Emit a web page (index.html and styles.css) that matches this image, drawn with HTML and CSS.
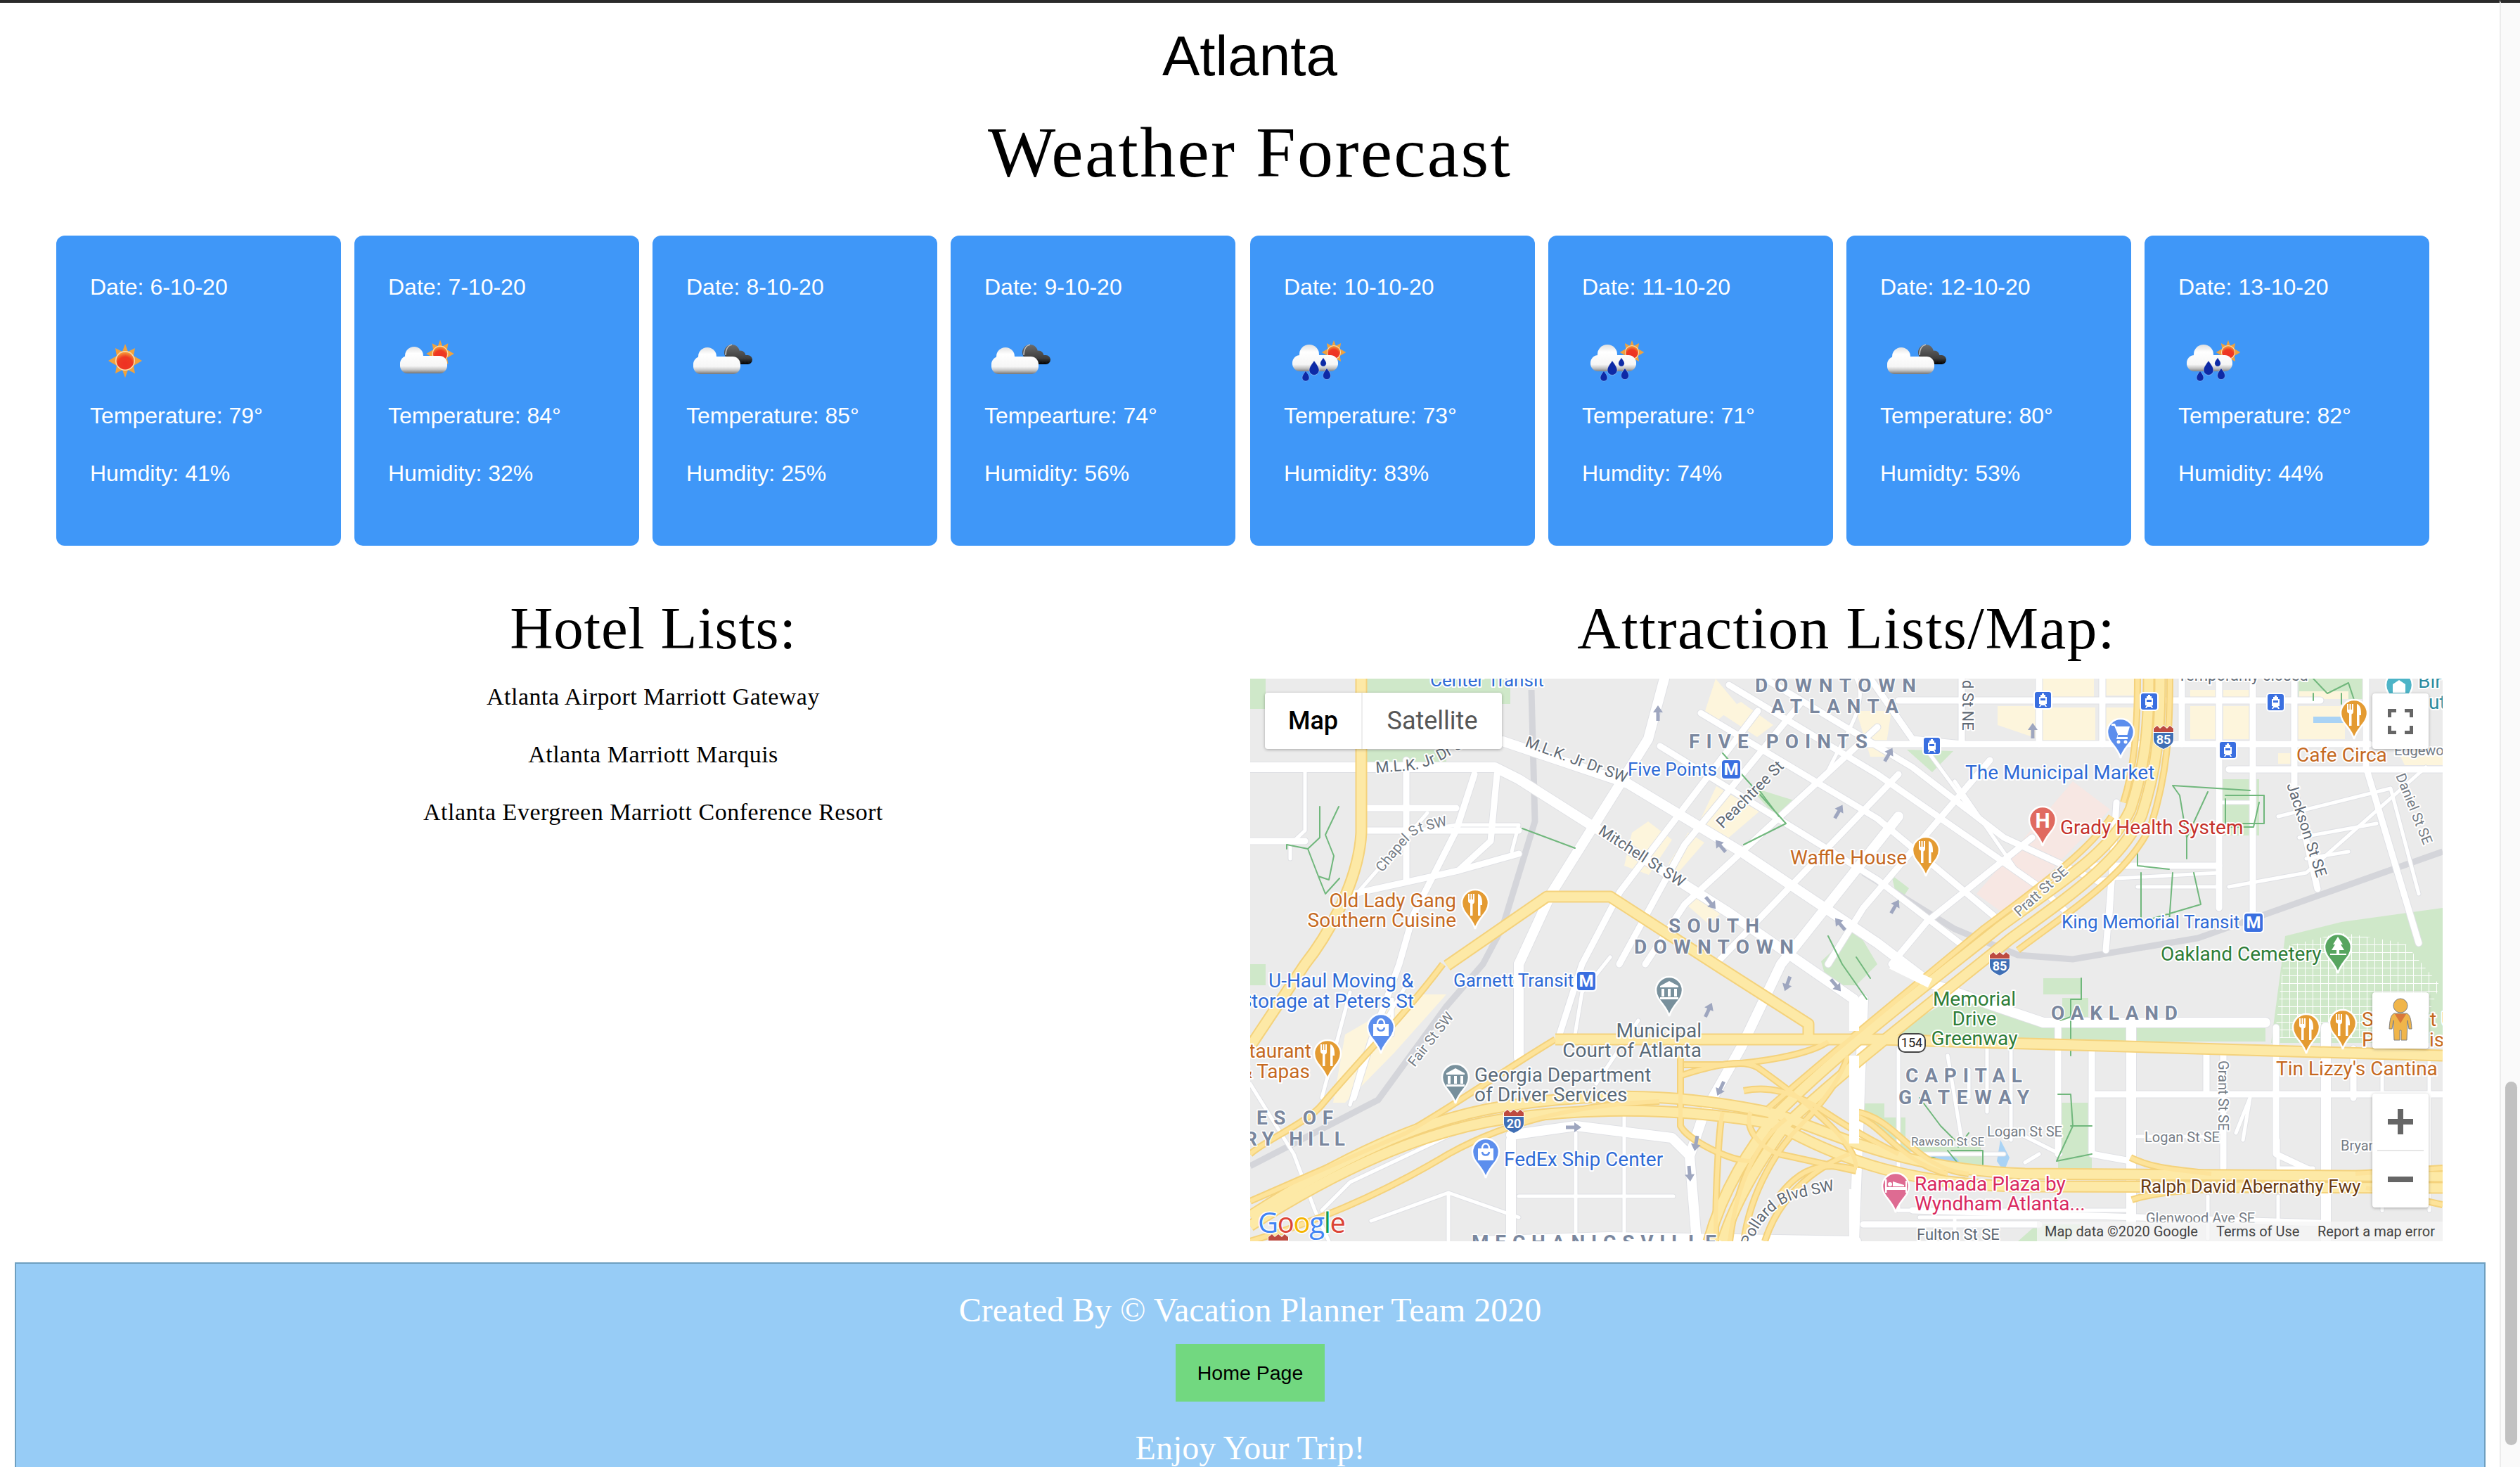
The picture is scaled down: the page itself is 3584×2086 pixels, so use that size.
FILE: index.html
```html
<!DOCTYPE html>
<html lang="en">
<head>
<meta charset="utf-8">
<title>Atlanta - Vacation Planner</title>
<link rel="stylesheet" href="styles.css">
</head>
<body>
<svg class="defs" width="0" height="0" aria-hidden="true">
  <defs>
    <filter id="soft" x="-10%" y="-10%" width="120%" height="120%"><feGaussianBlur stdDeviation="0.7"/></filter>
    <radialGradient id="discGrad" cx="50%" cy="70%" r="70%"><stop offset="0" stop-color="#ee3020"/><stop offset="0.6" stop-color="#ee3a22"/><stop offset="1" stop-color="#f6a23a"/></radialGradient>
    <linearGradient id="cloudGrad" gradientUnits="userSpaceOnUse" x1="0" y1="30" x2="0" y2="68"><stop offset="0" stop-color="#e2e2e2"/><stop offset="0.25" stop-color="#fff"/><stop offset="0.72" stop-color="#f6f6f6"/><stop offset="0.86" stop-color="#c4c4c4"/><stop offset="1" stop-color="#747474"/></linearGradient>
    <linearGradient id="darkGrad" gradientUnits="userSpaceOnUse" x1="0" y1="26" x2="0" y2="55"><stop offset="0" stop-color="#6f6f6f"/><stop offset="0.7" stop-color="#3d3d3d"/><stop offset="1" stop-color="#000"/></linearGradient>
    <g id="sunShape">
      <path class="ray" d="M0-24 4-13 14-18 12-7 24 0 12 7 14 18 4 13 0 24-4 13-14 18-12 7-24 0-12-7-14-18-4-13Z"/>
      <circle r="14" class="disc-ring"/><circle r="12.5" fill="url(#discGrad)"/>
    </g>
    <g id="cloudShape"><circle cx="37" cy="43" r="13"/><rect x="17" y="43" width="67" height="25" rx="11"/></g>
    <g id="dropShape"><path d="M0-1.7C.5-1 1-.4 1 .2A1 1 0 1 1-1 .2C-1-.4-.5-1 0-1.7Z"/></g>
    <symbol id="w-sun" viewBox="0 0 100 100"><g filter="url(#soft)"><use href="#sunShape" transform="translate(50 50)"/></g></symbol>
    <symbol id="w-few" viewBox="0 0 100 100"><g filter="url(#soft)"><use href="#sunShape" transform="translate(74 40) scale(.82)"/><use href="#cloudShape" fill="url(#cloudGrad)"/></g></symbol>
    <symbol id="w-broken" viewBox="0 0 100 100"><g filter="url(#soft)">
      <g fill="url(#darkGrad)"><circle cx="65" cy="38" r="11"/><circle cx="77" cy="43" r="7.5"/><rect x="56" y="42" width="38" height="13" rx="6.5"/></g>
      <path class="dark-rim" d="M56 42C56 33 60 28 65 27"/>
      <use href="#cloudShape" fill="url(#cloudGrad)" transform="translate(-7 1)"/></g></symbol>
    <symbol id="w-rain" viewBox="0 0 100 100"><g filter="url(#soft)">
      <use href="#sunShape" transform="translate(71 38) scale(.72)"/>
      <g fill="url(#cloudGrad)" transform="translate(0 -2)"><circle cx="36" cy="43" r="14"/><rect x="12" y="44" width="65" height="23" rx="11"/></g>
      <g class="drop">
        <use href="#dropShape" transform="translate(43 62) scale(7)"/>
        <use href="#dropShape" transform="translate(31 73) scale(5)"/>
        <use href="#dropShape" transform="translate(61 70) scale(5.5)"/>
        <use href="#dropShape" transform="translate(56 53) scale(4.2)"/>
      </g></g></symbol>

    <path id="pinShape" d="M0 0C-4-16-19-23-19-37A19 19 0 1 1 19-37C19-23 4-16 0 0Z"/>
    <g id="p-fork"><use href="#pinShape" class="pin pin-orange"/><path class="pg" d="M-10-50h2v8h1.500v-8h2v8H-3v-8h2v11c0 2-1 3-2.500 3.600V-19h-3.500v-17.400C-9-37-10-38-10-40ZM4-50c4 1 6 6 6 14v2H7.500v15H4Z"/></g>
    <g id="p-cart"><use href="#pinShape" class="pin pin-blue"/><path class="pg" d="M-13-49h5l1.500 4H13l-3.500 12h-13l-1 3H10v3H-6l2-7-5-12h-4Z"/><circle class="pg" cx="-3" cy="-23" r="2.500"/><circle class="pg" cx="7" cy="-23" r="2.500"/></g>
    <g id="p-bag"><use href="#pinShape" class="pin pin-blue"/><path class="pg" d="M-11-42h22v17h-22Z"/><path class="pl" d="M-5-42c0-9 10-9 10 0"/><path class="pl-blue" d="M-5-37c1 6 9 6 10 0"/></g>
    <g id="p-bank"><use href="#pinShape" class="pin pin-slate"/><path class="pg" d="M0-50-13-43v2H13v-2ZM-11-39h4v11h-4ZM-2-39h4v11h-4ZM7-39h4v11H7ZM-13-27H13v3H-13Z"/></g>
    <g id="p-tree"><use href="#pinShape" class="pin pin-green"/><path class="pg" d="M0-52-7-41h3l-5 8h7v5h-9v2H12v-2H2v-5h7l-5-8h3Z"/></g>
    <g id="p-bed"><use href="#pinShape" class="pin pin-pink"/><path class="pg" d="M-15-47h2.500v11H14v-9h2v17h-2v-4H-12.500v4H-15ZM-4-44 12-39v2H-4Z"/><circle class="pg" cx="-8" cy="-40" r="3"/></g>
    <g id="p-teal"><use href="#pinShape" class="pin pin-teal"/><path class="pg" d="M0-44-9-38v12H9v-12Z"/></g>
    <g id="p-h"><use href="#pinShape" class="pin pin-red"/><text class="pin-h" x="0" y="-26">H</text></g>
    <g id="tram"><rect class="box-white" x="-2" y="-2" width="27" height="27" rx="5"/><rect class="box-blue" width="23" height="23" rx="3"/><path class="pg" d="M10 2h3v2h2v3h2v10h-2l2 4h-2l-1-2H9l-1 2H6l2-4H6V7h2V4h2ZM8 9v3h7V9Z"/></g>
    <g id="metro"><rect class="box-white" x="-2" y="-2" width="30" height="30" rx="5"/><rect class="box-blue" width="26" height="26" rx="4"/><text class="metro-m" x="13" y="21">M</text></g>
    <g id="shield"><path class="shield-halo" d="M0 5 6 0l4 4 5-4 5 4 4-4 6 5V20C30 28 22 32 15 35 8 32 0 28 0 20Z"/><path class="shield-red" d="M1 5 6 1l4 4 5-4 5 4 4-4 5 4v5H1Z"/><path class="shield-blue" d="M1 11H29V20C29 27 22 31 15 34 8 31 1 27 1 20Z"/></g>
    <path id="arrow" d="M0-11 7-1H2.500V11h-5V-1H-7Z"/>

    <g id="hwBig">
      <path d="M1778 1728C1900 1650 2020 1590 2140 1572 2280 1550 2400 1555 2527 1583 2640 1625 2720 1662 2880 1668L3474 1672"/>
      <path d="M1778 1742C1900 1664 2020 1608 2140 1590 2270 1572 2400 1575 2527 1598 2620 1650 2720 1685 2880 1686L3474 1688"/>
      <path d="M3056 964C3056 1040 3050 1090 3030 1150 3000 1215 2920 1260 2840 1320 2740 1400 2620 1490 2527 1583 2490 1630 2450 1690 2430 1764"/>
      <path d="M3072 964C3072 1040 3068 1090 3046 1158 3016 1225 2940 1275 2858 1335 2760 1415 2640 1505 2540 1598 2510 1640 2470 1700 2450 1764"/>
      <path d="M1936 964V1183C1932 1260 1880 1340 1856 1370L1778 1487"/>
      <path d="M2058 1372 2200 1274H2290L2442 1372 2572 1455V1477"/>
      <path d="M2212 1477H2670L3474 1500"/>
    </g>
    <g id="hwSmall">
      <path d="M3040 964C3040 1030 3036 1090 3020 1140"/>
      <path d="M3086 964C3086 1040 3082 1100 3060 1170 3030 1240 2950 1290 2870 1350"/>
      <path d="M3003 1160C2970 1210 2900 1260 2820 1320 2700 1420 2600 1500 2515 1575"/>
      <path d="M2212 1477C2140 1520 2070 1570 2000 1610L1778 1707"/>
      <path d="M2360 1565C2250 1570 2150 1590 2060 1640 1960 1700 1860 1740 1778 1764"/>
      <path d="M2052 1370C2000 1440 1930 1510 1880 1570 1860 1595 1800 1620 1778 1640"/>
      <path d="M2395 1513H2450C2500 1510 2570 1500 2600 1480"/>
      <path d="M2392 1528C2440 1512 2480 1505 2500 1517 2560 1560 2640 1620 2640 1660"/>
      <path d="M2390 1500V1600C2400 1620 2460 1650 2490 1650"/>
      <path d="M2480 1550C2520 1542 2550 1555 2580 1570 2610 1590 2640 1610 2700 1640"/>
      <path d="M2460 1764C2470 1680 2500 1620 2540 1590"/>
      <path d="M2480 1764C2490 1690 2530 1630 2560 1600 2590 1570 2620 1530 2628 1500"/>
      <path d="M2510 1764C2530 1700 2580 1660 2630 1640"/>
      <path d="M2440 1764C2440 1680 2445 1600 2450 1580"/>
      <path d="M2530 1700C2560 1660 2590 1650 2640 1662"/>
      <path d="M2640 1664 2530 1640C2500 1630 2480 1600 2490 1580"/>
      <path d="M2640 1580C2700 1590 2720 1660 2800 1668"/>
      <path d="M2640 1586C2680 1600 2700 1650 2770 1668"/>
      <path d="M3030 1645C3060 1660 3090 1662 3145 1668"/>
      <path d="M3032 1705C3080 1690 3140 1690 3200 1688"/>
      <path d="M3350 1668 3474 1660"/>
      <path d="M3365 1688 3474 1712"/>
    </g>
    <g id="rdBig">
      <path d="M1778 1090H2126L2160 1107 2264 1173 2459 1297 2637 1420"/>
      <path d="M2137 1053 2315 1113 2476 1210 2670 1340 2745 1397 2829 1427 2906 1453H3222"/>
      <path d="M2700 1160 2533 1370 2477 1487 2423 1583 2403 1643 2413 1764"/>
      <path d="M2160 1370V1503M2149 1620V1764M2149 1613 2241 1600 2378 1617 2401 1640"/>
      <path d="M2367 964 2344 1050 2206 1270 2160 1370"/>
      <path d="M3031 1460V1740M3308 1460V1764M2650 1420 2637 1764"/>
      <path d="M2100 1764 2290 1758 2640 1764"/>
    </g>
    <g id="rdMid">
      <path d="M2419 1013 2670 1163 2846 1310"/>
      <path d="M2361 1060 2670 1250 2800 1350"/>
      <path d="M2459 973 2670 1100 2900 1260 2960 1315"/>
      <path d="M2510 964 2720 1090 2850 1190 2990 1255"/>
      <path d="M2500 1010 2304 1267 2250 1370 2218 1470"/>
      <path d="M2560 1000 2396 1200 2303 1370"/>
      <path d="M2670 1033 2396 1285 2340 1370"/>
      <path d="M2700 1100 2440 1370"/>
      <path d="M2830 1080 2650 1290 2600 1370"/>
      <path d="M2890 1190 2740 1310 2690 1370"/>
      <path d="M2660 964 2720 1050 2790 1057M2790 964V1057M2650 1057H3370M2700 995H3300"/>
      <path d="M2900 964V1057M2990 964V1057M3103 964V1057M3156 964V1290M3204 964V1300M3263 964V1120L3296 1263M3365 964V1090L3440 1340"/>
      <path d="M3170 1093H3474M3010 1140 3000 1300"/>
      <path d="M2975 1230H3156M3003 1250 2995 1350"/>
      <path d="M1936 1148H2071M1936 1180H2160M1778 1195H1856M2000 1080V1250"/>
      <path d="M2129 1100 2120 1195 2074 1237 1925 1270M2160 1213 2074 1237"/>
      <path d="M2097 1100 2071 1180 2010 1300 1990 1370 1950 1480 1925 1560"/>
      <path d="M3138 1490V1555M3162 1490V1660M3237 1460V1640L3290 1665M3347 1490V1560M2975 1555H3474M2927 1460V1640M2975 1490V1640L3030 1650"/>
      <path d="M2650 1740 2900 1740M2720 1720 3300 1738"/>
    </g>
    <g id="rdMin">
      <path d="M1856 1090V1180L1840 1195M1778 1195H1832M1835 1195V1220"/>
      <path d="M1925 1275 2030 1155M2020 1180 2071 1172H2160L2150 1210"/>
      <path d="M1980 1420V1470M1778 1540 1840 1640 1870 1720 1890 1764"/>
      <path d="M2000 1400 1940 1500 1920 1570M1920 1410 1880 1560"/>
      <path d="M2090 1600 1920 1680 1880 1720M1950 1735 2060 1695 2160 1730M2060 1695V1764M2160 1700H2380"/>
      <path d="M2241 1610V1764M2310 1580V1764M2330 1450 2270 1540M2290 1360 2250 1410 2240 1470"/>
      <path d="M2640 964C2660 1000 2620 1050 2600 1095M2780 1110 2870 1240M2740 1065 2810 1160"/>
      <path d="M3040 1260H3156M2975 1250 3156 1240M3156 1140H3204M3170 1260 3280 1240 3450 1090"/>
      <path d="M3240 1160 3400 1120 3440 1270M3270 1190 3380 1170M3280 1220 3340 1210"/>
      <path d="M2700 1490V1720M2770 1500 2790 1620M2826 1490V1580M2800 1520V1560M2860 1490V1620"/>
      <path d="M2700 1640H2850M2860 1605 2930 1640M2900 1640 2880 1652"/>
      <path d="M3040 1615H3150M3180 1610 3200 1560 3190 1620M3240 1620V1660H3290"/>
      <path d="M3455 1495V1720M3388 1500V1720M3140 1700V1760M3240 1700V1760"/>
      <path d="M2700 1720H3030M2730 1730H3040M2780 1730V1764"/>
    </g>
    <pattern id="cemGrid" width="11" height="11" patternUnits="userSpaceOnUse"><path class="cem-line" d="M0 0H11M0 0V11"/></pattern>
  </defs>
</svg>

<div class="app">
<main class="page">
  <h1 class="city">Atlanta</h1>
  <h2 class="forecast-title">Weather Forecast</h2>

  <section class="cols cards-row">
    <div class="cards">
      <article class="card"><p>Date: 6-10-20</p><svg class="wicon" viewBox="0 0 100 100"><use href="#w-sun"/></svg><p class="temp">Temperature: 79°</p><p>Humdity: 41%</p></article>
      <article class="card"><p>Date: 7-10-20</p><svg class="wicon" viewBox="0 0 100 100"><use href="#w-few"/></svg><p class="temp">Temperature: 84°</p><p>Humidity: 32%</p></article>
      <article class="card"><p>Date: 8-10-20</p><svg class="wicon" viewBox="0 0 100 100"><use href="#w-broken"/></svg><p class="temp">Temperature: 85°</p><p>Humdity: 25%</p></article>
      <article class="card"><p>Date: 9-10-20</p><svg class="wicon" viewBox="0 0 100 100"><use href="#w-broken"/></svg><p class="temp">Tempearture: 74°</p><p>Humidity: 56%</p></article>
    </div>
    <div class="cards">
      <article class="card"><p>Date: 10-10-20</p><svg class="wicon" viewBox="0 0 100 100"><use href="#w-rain"/></svg><p class="temp">Temperature: 73°</p><p>Humidity: 83%</p></article>
      <article class="card"><p>Date: 11-10-20</p><svg class="wicon" viewBox="0 0 100 100"><use href="#w-rain"/></svg><p class="temp">Temperature: 71°</p><p>Humdity: 74%</p></article>
      <article class="card"><p>Date: 12-10-20</p><svg class="wicon" viewBox="0 0 100 100"><use href="#w-broken"/></svg><p class="temp">Temperature: 80°</p><p>Humidty: 53%</p></article>
      <article class="card"><p>Date: 13-10-20</p><svg class="wicon" viewBox="0 0 100 100"><use href="#w-rain"/></svg><p class="temp">Temperature: 82°</p><p>Humidity: 44%</p></article>
    </div>
  </section>

  <section class="cols lists-row">
    <div class="hotels">
      <h2 class="sub-title hotel-title">Hotel Lists:</h2>
      <p class="hotel">Atlanta Airport Marriott Gateway</p>
      <p class="hotel">Atlanta Marriott Marquis</p>
      <p class="hotel">Atlanta Evergreen Marriott Conference Resort</p>
    </div>
    <div class="attractions">
      <h2 class="sub-title attr-title">Attraction Lists/Map:</h2>
      <div class="map">
        <svg class="map-canvas" viewBox="1778 964 1696 800" width="1696" height="800">
          <rect class="m-bg" x="1778" y="964" width="1696" height="800"/>
          <g class="m-park">
            <path d="M1778 964H1800V1007H1778ZM1943 964H2148V1000H1943ZM1942 1065H2057V1082H1942Z"/>
            <path d="M2712 1065 2778 1067 2748 1097ZM2487 1117 2551 1137 2528 1163ZM3159 1107H3213V1187H3159ZM3269 964H3370V993H3269Z"/>
            <path d="M2692 1467 2799 1407 2829 1427 2906 1450 3222 1457V1480H2692Z"/>
            <path d="M2927 1567H2975V1663H2927ZM2906 1390H2960V1413H2906ZM2933 1418H2970V1445H2933Z"/>
            <path d="M2643 1568H2680V1588H2710V1630H2817L2820 1660H2740L2680 1610 2643 1584Z"/>
            <path d="M2590 1366 2640 1320 2670 1370 2640 1400 2600 1400ZM2690 1243 2715 1262 2700 1285ZM1778 1370H1800V1400H1778ZM2897 1740H2960L2940 1764H2870Z"/>
            <path d="M3250 1330 3330 1310 3474 1290V1482H3230Z"/>
          </g>
          <path class="m-cem" d="M3250 1345 3330 1325 3420 1340 3470 1400 3440 1475H3235Z"/>
          <g class="m-comm">
            <path d="M2440 964 2470 1000 2437 1028 2425 1010ZM2476 997 2522 1030 2499 1047 2447 1013ZM2419 1163 2441 1117 2502 1153 2447 1200ZM2321 1183 2344 1167 2378 1193 2345 1243 2310 1230ZM2373 1227 2401 1183 2424 1197 2378 1250ZM2396 1283 2419 1270 2453 1293 2430 1313Z"/>
            <path d="M2841 1003H2894L2900 1050 2841 1030ZM2900 964H2978V990H2900ZM2900 1005H2980V1052H2900ZM2992 1005H3043V1050H2992ZM2992 964H3043V988H2992ZM3115 1003H3153V1050H3115ZM3162 1003H3203V1050H3162ZM3266 1003H3335V1050H3266ZM3115 980H3153V993H3115ZM3162 980H3203V993H3162ZM3270 982H3340V993H3270ZM3412 1070H3474V1087H3420ZM3240 1070H3258V1085H3240Z"/>
            <path d="M1913 1470 2011 1413H2057L1982 1497 1913 1567H1896Z"/>
            <path d="M2660 1075H2680L2690 1010 2640 1010Z"/>
          </g>
          <path class="m-hosp" d="M2948 1110 3001 1150 2855 1302 2811 1270Z"/>
          <path class="m-water" d="M3290 1018H3345V1027H3290ZM2744 1645C2760 1635 2780 1640 2786 1650 2780 1662 2750 1662 2744 1645ZM2845 1620 2858 1645 2850 1665 2840 1650Z"/>
          <g class="m-rail">
            <path d="M2178 980 2183 1167 2137 1317 2109 1370 2057 1430 1960 1563 1778 1657"/>
            <path d="M3474 1210 3126 1333 2948 1363 2870 1357 2780 1320 2650 1240"/>
          </g>
          <g class="r-case r-big"><use href="#rdBig"/></g>
          <g class="r-case r-mid"><use href="#rdMid"/></g>
          <g class="r-case r-min"><use href="#rdMin"/></g>
          <g class="r-fill r-big2"><use href="#rdBig"/></g>
          <g class="r-fill r-mid2"><use href="#rdMid"/></g>
          <g class="r-fill r-min2"><use href="#rdMin"/></g>
          <g class="m-trail">
            <path d="M1877 1146V1190L1860 1206 1875 1245 1890 1250 1897 1216 1885 1186 1904 1146M1860 1206 1830 1200V1206M1875 1245 1885 1270 1905 1248"/>
            <path d="M2165 1177 2240 1205M2450 1070 2540 1170 2480 1200M2500 1120 2530 1160M3090 1116 3200 1123M3090 1116 3100 1130 3110 1190 3140 1125M3110 1190V1220M3040 1200V1230L3085 1235M3165 1130H3220V1170H3165M3165 1135V1175H3205L3213 1140M3045 1240V1310L3130 1285 3120 1240M3090 1240 3085 1310"/>
            <path d="M2960 1390V1420H2945V1445L2930 1450M2945 1445V1500M2927 1555H2945L2948 1600 2925 1650 2975 1640M2945 1600H2975"/>
            <path d="M2730 1560 2760 1600 2780 1620M2720 1645 2750 1645 2790 1665H2820V1635H2775M2770 1635 2790 1660M2800 1610 2785 1630M2600 1330 2620 1370 2655 1420M2640 1360 2660 1390"/>
            <path d="M3290 964 3310 985 3340 970 3350 1000M3290 985V995M3330 985V1000"/>
          </g>
          <g class="hw hw-big-case"><use href="#hwBig"/></g>
          <g class="hw hw-small-case"><use href="#hwSmall"/></g>
          <g class="hw hw-big-fill"><use href="#hwBig"/></g>
          <g class="hw hw-small-fill"><use href="#hwSmall"/></g>
          <g class="r-fill r-over">
            <path d="M2637 1420V1465M2637 1500V1625M2637 1690V1764M2690 1370 2745 1397"/>
          </g>
          <g class="m-arrow">
            <use href="#arrow" transform="translate(2358 1013)"/>
            <use href="#arrow" transform="translate(2615 1153) rotate(30)"/>
            <use href="#arrow" transform="translate(2447 1202) rotate(-40)"/>
            <use href="#arrow" transform="translate(2433 1283) rotate(140)"/>
            <use href="#arrow" transform="translate(2617 1313) rotate(-40)"/>
            <use href="#arrow" transform="translate(2891 1038)"/>
            <use href="#arrow" transform="translate(2686 1072) rotate(30)"/>
            <use href="#arrow" transform="translate(2695 1288) rotate(30)"/>
            <use href="#arrow" transform="translate(2430 1435) rotate(25)"/>
            <use href="#arrow" transform="translate(2238 1602) rotate(90)"/>
            <use href="#arrow" transform="translate(2447 1547) rotate(205)"/>
            <use href="#arrow" transform="translate(2412 1625) rotate(190)"/>
            <use href="#arrow" transform="translate(2403 1668) rotate(175)"/>
            <use href="#arrow" transform="translate(2542 1398) rotate(200)"/>
            <use href="#arrow" transform="translate(2611 1400) rotate(140)"/>
          </g>
          <g class="t-street">
            <text x="2168" y="1060" transform="rotate(20 2168 1060)">M.L.K. Jr Dr SW</text>
            <path id="pMlk" class="no-paint" d="M1957 1098 2010 1094C2050 1085 2080 1065 2105 1040"/>
            <text><textPath href="#pMlk">M.L.K. Jr Dr SW</textPath></text>
            <path id="pChapel" class="no-paint" d="M1966 1240C1990 1210 2005 1190 2020 1182L2062 1172"/>
            <text class="t-sm"><textPath href="#pChapel">Chapel St SW</textPath></text>
            <text x="2450" y="1178" transform="rotate(-45 2450 1178)">Peachtree St</text>
            <text x="2272" y="1184" transform="rotate(33 2272 1184)">Mitchell St SW</text>
            <text x="3252" y="1115" transform="rotate(72 3252 1115)">Jackson St SE</text>
            <text class="t-sm" x="3407" y="1102" transform="rotate(68 3407 1102)">Daniel St SE</text>
            <text class="t-sm" x="2872" y="1303" transform="rotate(-42 2872 1303)">Pratt St SE</text>
            <text class="t-sm" x="2012" y="1517" transform="rotate(-52 2012 1517)">Fair St SW</text>
            <path id="pPollard" class="no-paint" d="M2490 1772C2500 1735 2530 1708 2560 1702L2625 1688"/>
            <text><textPath href="#pPollard">Pollard Blvd SW</textPath></text>
            <text class="t-sm" x="3155" y="1507" transform="rotate(90 3155 1507)">Grant St SE</text>
            <text class="t-sm" x="2826" y="1615">Logan St SE</text>
            <text class="t-sm" x="3050" y="1623">Logan St SE</text>
            <text class="t-xs" x="2718" y="1628">Rawson St SE</text>
            <text class="t-sm" x="3329" y="1635">Bryan</text>
            <text class="t-sm" x="3052" y="1738">Glenwood Ave SE</text>
            <text x="2726" y="1762">Fulton St SE</text>
            <text x="2791" y="966" transform="rotate(90 2791 966)">d St NE</text>
            <text class="t-sm" x="3405" y="1073">Edgewood</text>
            <text x="3097" y="967">Temporarily closed</text>
          </g>
          <g class="t-dist">
            <text x="2496" y="983" textLength="229" lengthAdjust="spacing">DOWNTOWN</text>
            <text x="2519" y="1013" textLength="181" lengthAdjust="spacing">ATLANTA</text>
            <text x="2402" y="1063" textLength="254" lengthAdjust="spacing">FIVE POINTS</text>
            <text x="2373" y="1325" textLength="129" lengthAdjust="spacing">SOUTH</text>
            <text x="2324" y="1355" textLength="227" lengthAdjust="spacing">DOWNTOWN</text>
            <text x="1787" y="1598" textLength="109" lengthAdjust="spacing">ES OF</text>
            <text x="1770" y="1628" textLength="143" lengthAdjust="spacing">RY HILL</text>
            <text x="2917" y="1449" textLength="180" lengthAdjust="spacing">OAKLAND</text>
            <text x="2710" y="1538" textLength="166" lengthAdjust="spacing">CAPITAL</text>
            <text x="2700" y="1569" textLength="186" lengthAdjust="spacing">GATEWAY</text>
            <text x="2093" y="1775" textLength="348" lengthAdjust="spacing">MECHANICSVILLE</text>
          </g>
          <use href="#shield" transform="translate(3062 1030)"/><text class="shield-t" x="3077" y="1057">85</text>
          <use href="#shield" transform="translate(2829 1352)"/><text class="shield-t" x="2844" y="1379">85</text>
          <use href="#shield" transform="translate(2138 1576)"/><text class="shield-t" x="2153" y="1603">20</text>
          <use href="#shield" transform="translate(1803 1753)"/>
          <rect class="s154" x="2700" y="1469" width="38" height="26" rx="9"/><text class="s154-t" x="2719" y="1488">154</text>
          <use href="#tram" transform="translate(2894 983)"/>
          <use href="#tram" transform="translate(3045 985)"/>
          <use href="#tram" transform="translate(3225 986)"/>
          <use href="#tram" transform="translate(2736 1048)"/>
          <use href="#tram" transform="translate(3157 1054)"/>
          <use href="#metro" transform="translate(2449 1080)"/>
          <use href="#metro" transform="translate(2243 1381)"/>
          <use href="#metro" transform="translate(3192 1298)"/>
          <use href="#p-teal" transform="translate(3412 1010)"/>
          <use href="#p-cart" transform="translate(3016 1077)"/>
          <use href="#p-h" transform="translate(2905 1202)"/>
          <use href="#p-fork" transform="translate(2739 1245)"/>
          <use href="#p-fork" transform="translate(2098 1320)"/>
          <use href="#p-fork" transform="translate(3348 1050)"/>
          <use href="#p-fork" transform="translate(1888 1534)"/>
          <use href="#p-fork" transform="translate(3280 1497)"/>
          <use href="#p-fork" transform="translate(3332 1491)"/>
          <use href="#p-bag" transform="translate(1964 1497)"/>
          <use href="#p-bag" transform="translate(2113 1674)"/>
          <use href="#p-bank" transform="translate(2374 1444)"/>
          <use href="#p-bank" transform="translate(2070 1568)"/>
          <use href="#p-tree" transform="translate(3325 1383)"/>
          <use href="#p-bed" transform="translate(2696 1723)"/>
          <g class="t-poi t-blue">
            <text class="t-transit" x="2034" y="975">Center Transit</text>
            <text class="t-transit" x="2315" y="1102">Five Points</text>
            <text x="2795" y="1107">The Municipal Market</text>
            <text class="t-transit" x="2067" y="1402">Garnett Transit</text>
            <text x="1804" y="1403">U-Haul Moving &amp;</text>
            <text class="end" x="2011" y="1432">Storage at Peters St</text>
            <text x="2139" y="1657">FedEx Ship Center</text>
            <text class="t-transit" x="2932" y="1319">King Memorial Transit</text>
          </g>
          <g class="t-poi t-orange">
            <text x="2546" y="1228">Waffle House</text>
            <text class="end" x="2071" y="1289">Old Lady Gang</text>
            <text class="end" x="2071" y="1317">Southern Cuisine</text>
            <text x="3266" y="1082">Cafe Circa</text>
            <text class="end" x="1865" y="1503">Restaurant</text>
            <text class="end" x="1863" y="1532">&amp; Tapas</text>
            <text x="3237" y="1528">Tin Lizzy's Cantina</text>
            <text x="3359" y="1458">S</text>
            <text x="3359" y="1487">P</text>
            <text x="3456" y="1458">t U</text>
            <text x="3455" y="1487">is</text>
          </g>
          <g class="t-poi t-green">
            <text x="3073" y="1365">Oakland Cemetery</text>
            <text class="mid" x="2808" y="1429">Memorial</text>
            <text class="mid" x="2808" y="1457">Drive</text>
            <text class="mid" x="2808" y="1485">Greenway</text>
          </g>
          <g class="t-poi t-red"><text x="2930" y="1185">Grady Health System</text></g>
          <g class="t-poi t-slate">
            <text class="end" x="2420" y="1474">Municipal</text>
            <text class="end" x="2420" y="1502">Court of Atlanta</text>
            <text x="2097" y="1537">Georgia Department</text>
            <text x="2097" y="1565">of Driver Services</text>
          </g>
          <g class="t-poi t-pink">
            <text x="2723" y="1692">Ramada Plaza by</text>
            <text x="2723" y="1720">Wyndham Atlanta...</text>
          </g>
          <g class="t-poi t-brown"><text class="t-transit" x="3044" y="1695">Ralph David Abernathy Fwy</text></g>
          <g class="t-poi t-teal">
            <text x="3439" y="977">Bir</text>
            <text x="3454" y="1007">ut</text>
          </g>
          <text class="g-logo" x="1789" y="1752" textLength="125"><tspan class="g-b">G</tspan><tspan class="g-r">o</tspan><tspan class="g-y">o</tspan><tspan class="g-b">g</tspan><tspan class="g-g">l</tspan><tspan class="g-r">e</tspan></text>
        </svg>

        <div class="map-type">
          <button class="map-type-btn map-active">Map</button>
          <button class="map-type-btn">Satellite</button>
        </div>
        <div class="map-ctl map-full">
          <svg viewBox="0 0 36 36" width="36" height="36"><path class="ctl-ico" d="M0 0H12V5H5V12H0ZM24 0H36V12H31V5H24ZM0 24H5V31H12V36H0ZM31 24H36V36H24V31H31Z"/></svg>
        </div>
        <div class="map-ctl map-peg">
          <svg viewBox="0 0 36 64" width="36" height="64">
            <circle class="peg" cx="18" cy="11" r="10"/>
            <path class="peg" d="M9 22H27C31 24 33 28 34 44H30L28 32 27 60H19V46H17V60H9L8 32 6 44H2C3 28 5 24 9 22Z"/>
            <path class="peg-scarf" d="M10 23H26L18 36Z"/>
          </svg>
        </div>
        <div class="map-ctl map-zoom">
          <div class="zoom-btn"><svg viewBox="0 0 36 36" width="36" height="36"><path class="ctl-ico" d="M14 0H22V14H36V22H22V36H14V22H0V14H14Z"/></svg></div>
          <div class="zoom-sep"></div>
          <div class="zoom-btn"><svg viewBox="0 0 36 36" width="36" height="36"><path class="ctl-ico" d="M0 14H36V22H0Z"/></svg></div>
        </div>
        <div class="map-attr"><span class="a-data">Map data ©2020 Google</span><span class="a-terms">Terms of Use</span><span>Report a map error</span></div>
      </div>
    </div>
  </section>

  <footer class="footer">
    <p class="foot-text">Created By © Vacation Planner Team 2020</p>
    <a class="home-btn" href="#">Home Page</a>
    <p class="foot-text foot-enjoy">Enjoy Your Trip!</p>
  </footer>
</main>
<aside class="scrollbar"><div class="thumb"></div></aside>
</div>
</body>
</html>
```
FILE: styles.css
```css
* { box-sizing: border-box; }
html, body { margin: 0; height: 2086px; overflow: hidden; background: #fff; }
.defs { position: absolute; }
.app { display: flex; height: 2086px; }
.page { flex: 1; min-width: 0; border-top: 4px solid #2a2a2a; overflow: hidden; }
.scrollbar { width: 29px; background: #fafafa; border-left: 2px solid #ececec; border-top: 4px solid #2a2a2a; position: relative; }
.thumb { position: absolute; left: 6px; width: 17px; top: 1534px; height: 517px; background: #c1c1c1; border-radius: 9px; }

.city { margin: 30px 0 0; font: 400 80px/92px "Liberation Sans", Arial, sans-serif; text-align: center; color: #000; }
.forecast-title { margin: 33px 0 0; font: 400 102px/116px "Liberation Serif", Georgia, serif; letter-spacing: 2.3px; text-align: center; color: #000; }

.cols { display: grid; grid-template-columns: 1698px 1698px; margin-left: 80px; }
.cards-row { margin-top: 60px; }
.cards { display: grid; grid-template-columns: repeat(4, 405px); gap: 19px; }
.card { height: 441px; padding: 50px 48px 0; background: #3f97f8; border-radius: 12px; color: #fff; font: 400 32px/46px "Liberation Sans", Arial, sans-serif; display: flex; flex-direction: column; }
.card p { margin: 0; white-space: nowrap; }
.card .temp { margin: 5px 0 36px; }
.wicon { display: block; width: 100px; height: 100px; margin-top: 32px; flex: none; }
.ray { fill: #f0a23e; }
.disc-ring { fill: #fbdcae; }
.dark-rim { fill: none; stroke: #bdbdbd; stroke-width: 1.6; }
.drop { fill: #0a2aa6; stroke: rgba(255, 255, 255, .45); stroke-width: .12; }

.lists-row { margin-top: 67px; }
.hotels, .attractions { min-width: 0; }
.sub-title { margin: 0; font: 400 85px/100px "Liberation Serif", Georgia, serif; text-align: center; color: #000; }
.hotel-title { letter-spacing: .7px; }
.attr-title { letter-spacing: 1.5px; }
.hotel { margin: 25px 0 36px; font: 400 34px/46px "Liberation Serif", Georgia, serif; letter-spacing: .5px; text-align: center; color: #000; }
.hotel + .hotel { margin-top: 36px; }
.attractions .sub-title { width: 1696px; margin-bottom: 22px; }

.map { position: relative; width: 1696px; height: 800px; overflow: hidden; }
.map-canvas { display: block; }
.m-bg { fill: #ebebeb; }
.m-park { fill: #cfe8c9; }
.m-cem { fill: url(#cemGrid); }
.cem-line { fill: none; stroke: #fff; stroke-width: 2; }
.m-comm { fill: #fdf5dc; }
.m-hosp { fill: #f7e7e3; }
.m-water { fill: #a9d3f5; }
.m-rail { fill: none; stroke: #d4d5da; stroke-width: 9; }
.r-case, .r-fill, .hw, .m-trail { fill: none; stroke-linecap: round; stroke-linejoin: round; }
.r-case { stroke: #dfe0e4; }
.r-fill { stroke: #fff; }
.r-big { stroke-width: 16; }
.r-mid { stroke-width: 11; }
.r-min { stroke-width: 7; }
.r-big2 { stroke-width: 14; }
.r-mid2 { stroke-width: 9; }
.r-min2 { stroke-width: 5; }
.r-over { stroke-width: 14; stroke-linecap: butt; }
.m-trail { stroke: #70b77c; stroke-width: 2; }
.hw { stroke-linecap: butt; }
.hw-big-case { stroke: #f4d27c; stroke-width: 17; }
.hw-small-case { stroke: #f4d27c; stroke-width: 10; }
.hw-big-fill { stroke: #fde9a6; stroke-width: 13; }
.hw-small-fill { stroke: #fde39a; stroke-width: 6; }
.m-arrow { fill: #9ea6bf; }
.no-paint { fill: none; stroke: none; }

.t-street text, .t-poi text, .t-dist text { paint-order: stroke; stroke: #fff; stroke-linejoin: round; }
.t-street { font: 400 22px Roboto, sans-serif; fill: #5f6974; }
.t-street text { stroke-width: 4px; }
.t-street .t-sm { font-size: 20px; fill: #757c85; }
.t-street .t-xs { font-size: 17px; fill: #757c85; }
.t-dist { font: 700 28px Roboto, sans-serif; fill: #7a879e; }
.t-dist text { stroke-width: 3px; }
.t-poi { font: 400 28px Roboto, sans-serif; }
.t-poi text { stroke-width: 4px; }
.t-poi .t-transit { font-size: 26px; }
.t-poi .end { text-anchor: end; }
.t-poi .mid { text-anchor: middle; }
.t-blue { fill: #2f6bd6; }
.t-orange { fill: #c5691f; }
.t-green { fill: #2e7d37; }
.t-red { fill: #c5312b; }
.t-slate { fill: #5a6a78; }
.t-pink { fill: #d9285f; }
.t-brown { fill: #6b3a10; }
.t-teal { fill: #2b8b9f; }

.pin { stroke: #fff; stroke-width: 2.5; }
.pin-orange { fill: #e49b32; }
.pin-blue { fill: #5c8eed; }
.pin-slate { fill: #78909c; }
.pin-green { fill: #57a55f; }
.pin-pink { fill: #de6b92; }
.pin-teal { fill: #4db4c7; }
.pin-red { fill: #e06a60; }
.pg { fill: #fff; }
.pl { fill: none; stroke: #fff; stroke-width: 2.5; }
.pl-blue { fill: none; stroke: #5c8eed; stroke-width: 2.5; }
.pin-h { font: 700 30px Roboto, sans-serif; fill: #fff; text-anchor: middle; }
.box-white { fill: #fff; }
.box-blue { fill: #3a6fe0; }
.metro-m { font: 700 24px Roboto, sans-serif; fill: #fff; text-anchor: middle; }
.shield-halo { fill: #fff; }
.shield-red { fill: #bd4b40; }
.shield-blue { fill: #3f6fb5; }
.shield-t { font: 700 18px Roboto, sans-serif; fill: #fff; text-anchor: middle; }
.s154 { fill: #fff; stroke: #444; stroke-width: 2; }
.s154-t { font: 400 18px Roboto, sans-serif; fill: #222; text-anchor: middle; }
.g-logo { font: 500 40px "Open Sans", sans-serif; paint-order: stroke; stroke: #fff; stroke-width: 3px; }
.g-b { fill: #4285f4; }
.g-r { fill: #db4437; }
.g-y { fill: #f4b400; }
.g-g { fill: #0f9d58; }

.map-type { position: absolute; left: 21px; top: 20px; display: flex; height: 80px; background: #fff; border-radius: 4px; box-shadow: 0 1px 4px rgba(0, 0, 0, .3); }
.map-type-btn { border: 0; background: none; padding: 0; height: 80px; font: 400 36px Roboto, sans-serif; color: #565656; width: 198px; }
.map-active { width: 139px; font-weight: 500; color: #000; border-right: 2px solid #ededed; }
.map-ctl { position: absolute; left: 1596px; width: 80px; background: #fff; border-radius: 4px; box-shadow: 0 1px 4px rgba(0, 0, 0, .3); display: flex; align-items: center; justify-content: center; }
.map-full { top: 21px; height: 79px; }
.map-peg { top: 446px; height: 80px; }
.map-zoom { top: 590px; height: 162px; flex-direction: column; }
.zoom-btn { height: 80px; display: flex; align-items: center; justify-content: center; }
.zoom-sep { width: 66px; height: 2px; background: #e6e6e6; }
.ctl-ico { fill: #666; }
.peg { fill: #f0b54a; stroke: #7d7d7d; stroke-width: 1; }
.peg-scarf { fill: #d9773b; }
.map-attr { position: absolute; right: 0; bottom: 0; width: 577px; height: 28px; padding-left: 11px; display: flex; align-items: center; background: rgba(245, 245, 245, .75); font: 400 20px/28px Roboto, sans-serif; color: #444; white-space: nowrap; }
.a-data { width: 244px; }
.a-terms { width: 144px; }

.footer { margin: 30px 20px 0 21px; height: 400px; padding-top: 38px; border: 2px solid #6e9fc0; background: #97ccf6; text-align: center; }
.foot-text { margin: 0; font: 400 48px/55px "Liberation Serif", "Times New Roman", serif; color: #fff; }
.home-btn { display: block; width: 212px; height: 82px; margin: 21px auto 0; background: #72d880; color: #000; text-decoration: none; font: 400 28.5px/82px "Liberation Sans", Arial, sans-serif; }
.foot-enjoy { margin-top: 38px; }
```
